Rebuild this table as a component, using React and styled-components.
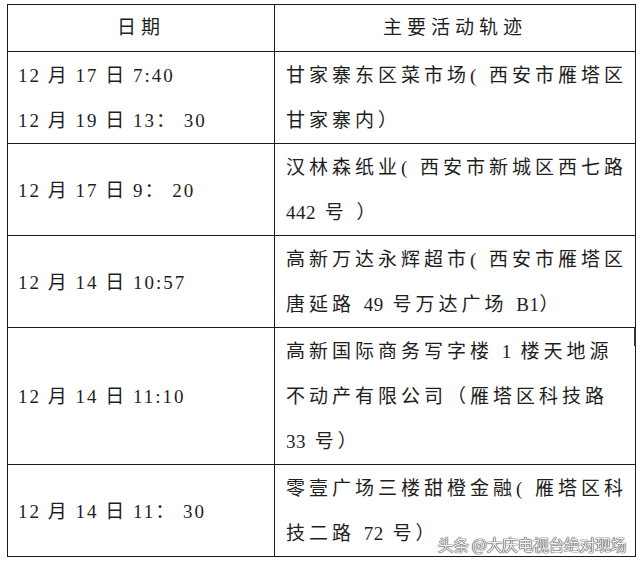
import React from 'react'
import styled, { createGlobalStyle } from 'styled-components'

const GlobalStyle = createGlobalStyle`
  html, body {
    margin: 0;
    padding: 0;
    background: #fff;
  }
  body {
    font-family: "Liberation Serif", "Noto Sans CJK SC", serif;
    color: #1e1e1e;
  }
`

const Page = styled.div`
  position: relative;
  width: 640px;
  height: 565px;
  padding: 4px 0 0 7px;
  box-sizing: border-box;
  overflow: hidden;

  /* scan mark just right of the table */
  &::after {
    content: '';
    position: absolute;
    left: 634px;
    top: 328px;
    width: 2px;
    height: 18px;
    background: #333;
  }
`

const Table = styled.table`
  border-collapse: collapse;
  table-layout: fixed;
  width: 626px;
  font-size: 19px;
`

const HeadCell = styled.th`
  border: 1.5px solid #1c1c1c;
  font-weight: normal;
  text-align: center;
  line-height: 44px;
  padding: 1px 0;
  letter-spacing: 5px;
  width: ${p => p.$width}px;
`

const Cell = styled.td`
  border: 1.5px solid #1c1c1c;
  vertical-align: middle;
  line-height: 45px;
  padding: 1px 0 0 ${p => p.$pad}px;
  letter-spacing: ${p => p.$spacing}px;
  white-space: nowrap;
`

const Line = styled.div`
  display: block;
`

const Num = styled.span`
  letter-spacing: 0.5px;
`

const Watermark = styled.div`
  position: absolute;
  right: 14px;
  bottom: 9px;
  font-family: "Noto Sans CJK SC", sans-serif;
  font-size: 16px;
  letter-spacing: -0.5px;
  color: #f4f4f4;
  text-shadow: 0 0 1px #333, 0 0 1px #333, 0 0 1px #555;
`

const rows = [
  { date: ['12 月 17 日 7:40', '12 月 19 日 13： 30'], place: ['甘家寨东区菜市场( 西安市雁塔区', '甘家寨内）'] },
  { date: ['12 月 17 日 9： 20'], place: ['汉林森纸业( 西安市新城区西七路', '442 号 ）'] },
  { date: ['12 月 14 日 10:57'], place: ['高新万达永辉超市( 西安市雁塔区', '唐延路 49 号万达广场 B1）'] },
  { date: ['12 月 14 日 11:10'], place: ['高新国际商务写字楼 1 楼天地源', '不动产有限公司（雁塔区科技路', '33 号）'] },
  { date: ['12 月 14 日 11： 30'], place: ['零壹广场三楼甜橙金融( 雁塔区科', '技二路 72 号）'] }
]

// keep latin digits tight, CJK spaced out like the scanned document
const withNums = text =>
  text.split(/([A-Za-z0-9]+)/).map((part, i) =>
    /^[A-Za-z0-9]+$/.test(part) ? <Num key={i}>{part}</Num> : part
  )

export default function App() {
  return (
    <Page>
      <GlobalStyle />
      <Table>
        <thead>
          <tr>
            <HeadCell $width={266}>日期</HeadCell>
            <HeadCell $width={360}>主要活动轨迹</HeadCell>
          </tr>
        </thead>
        <tbody>
          {rows.map((row, i) => (
            <tr key={i}>
              <Cell $pad={10} $spacing={2}>
                {row.date.map(d => <Line key={d}>{d}</Line>)}
              </Cell>
              <Cell $pad={11} $spacing={4}>
                {row.place.map(p => <Line key={p}>{withNums(p)}</Line>)}
              </Cell>
            </tr>
          ))}
        </tbody>
      </Table>
      <Watermark>头条 @大庆电视台绝对现场</Watermark>
    </Page>
  )
}
